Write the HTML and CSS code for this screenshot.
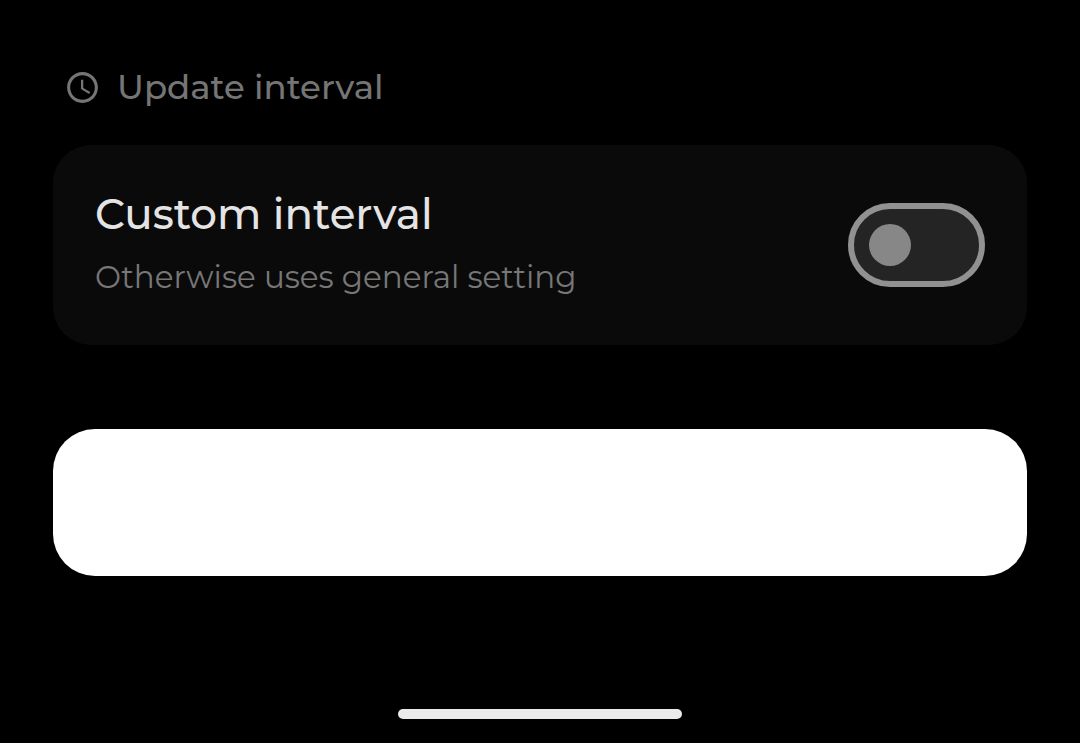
FILE: index.html
```html
<!DOCTYPE html>
<html lang="en">
<head>
    <meta charset="UTF-8">
    <meta name="viewport" content="width=device-width, initial-scale=1.0">
    <title>Update interval</title>
    <link rel="stylesheet" href="styles.css">
</head>
<body>
    <main class="settings">
        <h2 class="section-title">
            <svg class="section-icon" viewBox="0 0 24 24" aria-hidden="true">
                <path d="M11.99 2C6.47 2 2 6.48 2 12s4.47 10 9.99 10C17.52 22 22 17.52 22 12S17.52 2 11.99 2zM12 20c-4.42 0-8-3.58-8-8s3.58-8 8-8 8 3.58 8 8-3.58 8-8 8zm.5-13H11v6l5.25 3.15.75-1.23-4.5-2.67z"/>
            </svg>
            <span>Update interval</span>
        </h2>

        <div class="card">
            <label class="card-text" for="customInterval">
                <span class="card-title">Custom interval</span>
                <span class="card-subtitle">Otherwise uses general setting</span>
            </label>
            <input type="checkbox" role="switch" id="customInterval" class="switch">
        </div>

        <button type="button" class="save-button" aria-label="Save"></button>
    </main>

    <div class="home-bar"></div>
</body>
</html>
```

FILE: styles.css
```css
* {
    box-sizing: border-box;
}

body {
    font-family: Montserrat, Inter, sans-serif;
    margin: 0;
    min-height: 100vh;
    background-color: #000;
    display: flex;
    flex-direction: column;
    justify-content: space-between;
    align-items: center;
}

.settings {
    width: 100%;
    padding: 64px 53px;
}

.section-title {
    display: flex;
    align-items: center;
    gap: 16px;
    margin: 0 0 34px;
    padding-left: 11px;
    color: #757575;
    font-size: 34px;
    font-weight: 500;
    line-height: 47px;
}

.section-icon {
    width: 37px;
    height: 37px;
    fill: currentColor;
}

.card {
    display: flex;
    justify-content: space-between;
    align-items: center;
    min-height: 200px;
    padding: 42px;
    border-radius: 38px;
    background-color: #0a0a0a;
}

.card-text {
    display: flex;
    flex-direction: column;
    gap: 10px;
}

.card-title {
    color: #e4e4e4;
    font-size: 42px;
    font-weight: 500;
    line-height: 54px;
}

.card-subtitle {
    color: #777;
    font-size: 31px;
    line-height: 52px;
}

.switch {
    appearance: none;
    display: flex;
    align-items: center;
    flex-shrink: 0;
    width: 137px;
    height: 84px;
    margin: 0;
    padding: 0 15px;
    border: 6px solid #919191;
    border-radius: 42px;
    background-color: #242424;
    cursor: pointer;
}

.switch::before {
    content: "";
    width: 42px;
    height: 42px;
    border-radius: 50%;
    background-color: #878787;
}

.switch:checked {
    justify-content: flex-end;
}

.save-button {
    display: block;
    width: 100%;
    height: 147px;
    margin-top: 84px;
    border: none;
    border-radius: 42px;
    background-color: #fff;
    cursor: pointer;
}

.home-bar {
    width: 284px;
    height: 10px;
    margin-bottom: 24px;
    border-radius: 5px;
    background-color: #ebebeb;
}
```
